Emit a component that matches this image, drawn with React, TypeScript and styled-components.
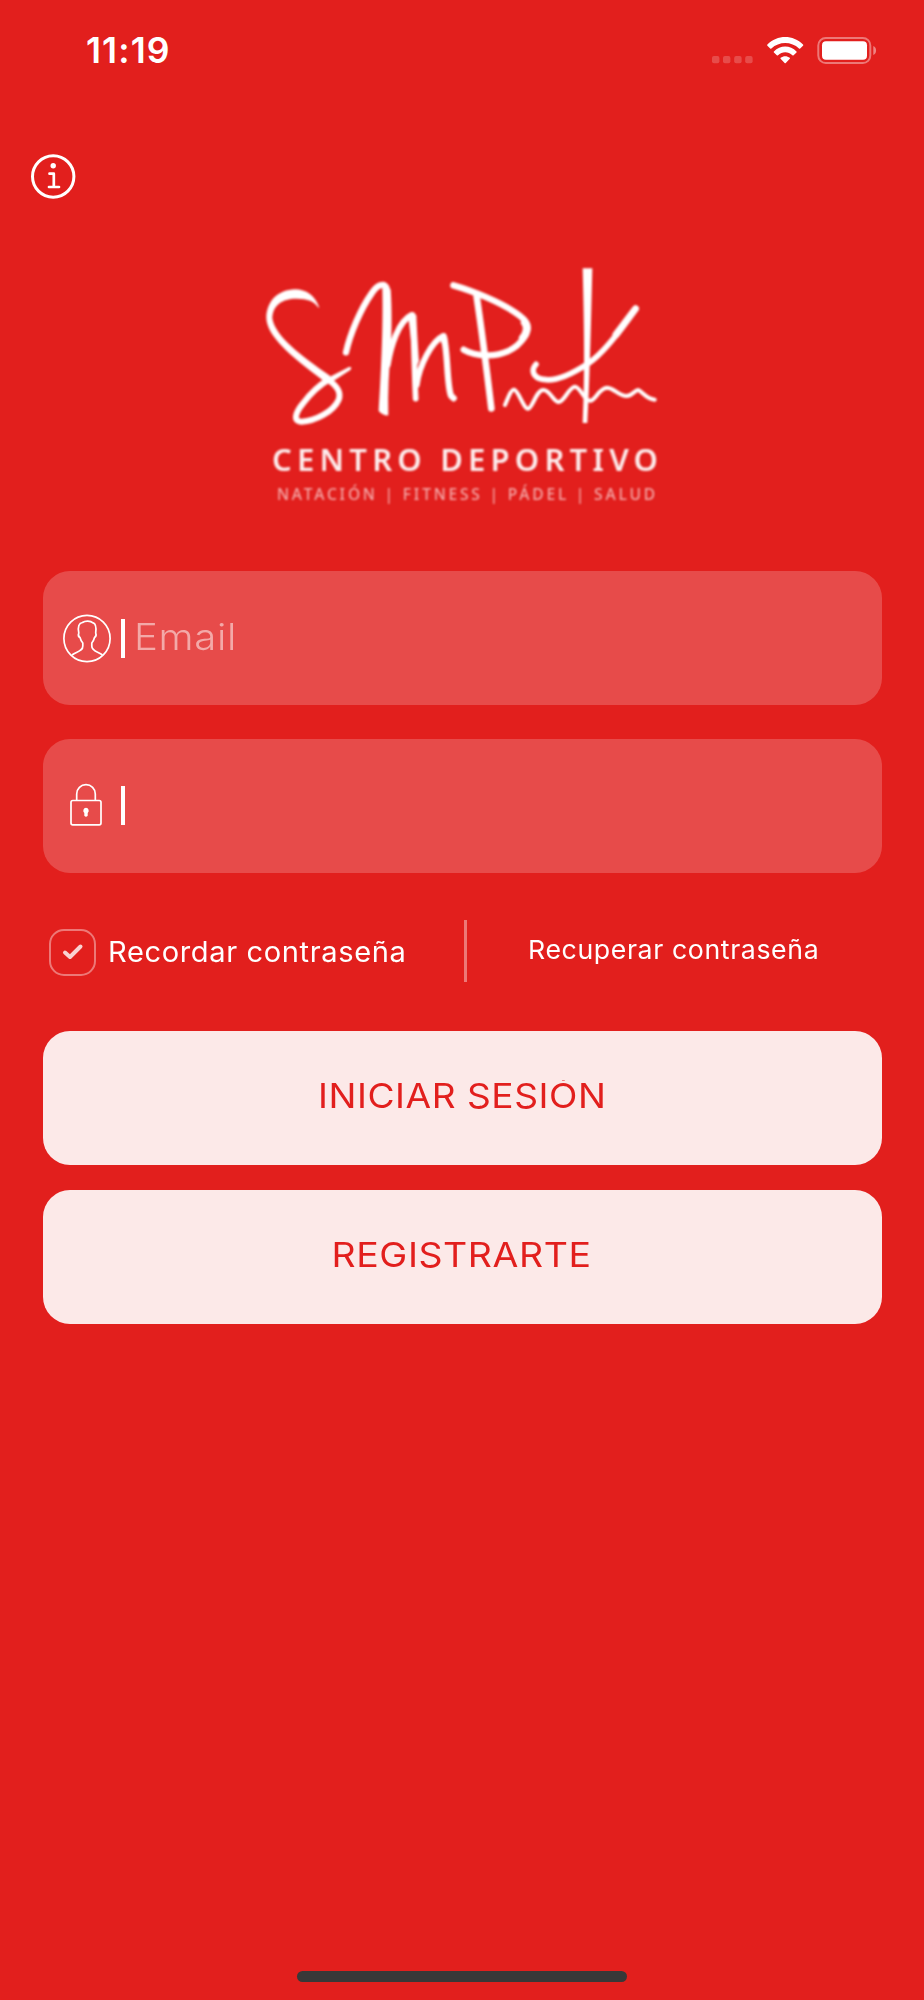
import React from "react";
import styled, { createGlobalStyle } from "styled-components";

const RED = "#e21f1d";

const GlobalStyle = createGlobalStyle`
  * { box-sizing: border-box; }
  body { margin: 0; background: ${RED}; }
`;

const Screen = styled.main`
  width: 924px;
  height: 2000px;
  background: ${RED};
  color: #fff;
  font-family: Inter, "Liberation Sans", sans-serif;
  display: flex;
  flex-direction: column;
  overflow: hidden;
`;

const StatusBar = styled.header`
  height: 100px;
  padding: 0 46px 0 86px;
  display: flex;
  justify-content: space-between;
  align-items: center;
`;

const Clock = styled.time`
  padding-top: 2px;
  font-size: 35.5px;
  line-height: 42px;
  font-weight: 600;
  letter-spacing: 1.1px;
`;

const Indicators = styled.svg`
  width: 166px;
  height: 30px;
`;

const TopBar = styled.nav`
  height: 160px;
  padding: 53px 0 0 30px;
`;

const InfoButton = styled.button`
  display: block;
  width: 46px;
  height: 46px;
  padding: 0;
  border: 0;
  background: none;
  svg { display: block; }
`;

const Logo = styled.svg`
  display: block;
  width: 410px;
  height: 250px;
  margin-left: 260px;
  filter: blur(0.8px);
`;

const Form = styled.form`
  display: flex;
  flex-direction: column;
  padding: 61px 42.5px 0;
`;

const Field = styled.label`
  height: 134px;
  border-radius: 27px;
  background: rgba(255, 255, 255, 0.2);
  display: flex;
  align-items: center;
  padding-left: 20.5px;
  & + & {
    margin-top: 34px;
    padding-bottom: 1px;
  }
`;

const FieldIcon = styled.svg`
  width: 48px;
  height: 50px;
  flex: none;
`;

const Bar = styled.span`
  width: 4px;
  height: 39px;
  margin-left: 10px;
  background: #fff;
`;

const Placeholder = styled.span`
  margin: -3px 0 0 8.5px;
  font-size: 37px;
  font-weight: 300;
  letter-spacing: 0.6px;
  color: rgba(255, 255, 255, 0.52);
  transform: scaleX(1.085);
  transform-origin: left;
`;

const Options = styled.div`
  height: 62px;
  margin: 47px 0 49px;
  display: flex;
  align-items: center;
`;

const Check = styled.span`
  width: 47px;
  height: 47px;
  margin: 2px 11.5px 0 6.5px;
  border: 2px solid rgba(255, 255, 255, 0.4);
  border-radius: 15px;
  display: flex;
  align-items: center;
  justify-content: center;
`;

const OptionText = styled.span<{ $size: number; $stretch: number; $shift: number }>`
  font-size: ${(p) => p.$size}px;
  letter-spacing: 0.6px;
  line-height: 36px;
  margin-top: ${(p) => p.$shift}px;
  font-weight: 400;
  white-space: nowrap;
  transform: scaleX(${(p) => p.$stretch});
  transform-origin: left;
`;

const Remember = styled.div`
  width: 421.5px;
  display: flex;
  align-items: center;
`;

const Divider = styled.span`
  width: 2.5px;
  height: 62px;
  margin-right: 61.5px;
  background: rgba(255, 255, 255, 0.4);
`;

const Button = styled.button`
  height: 134px;
  border: 0;
  border-radius: 27px;
  padding: 0 0 5px;
  background: rgba(255, 255, 255, 0.9);
  color: ${RED};
  font: 400 34.5px/34px Inter, "Liberation Sans", sans-serif;
  display: flex;
  align-items: center;
  justify-content: center;
  & + & { margin-top: 25px; }
`;

const Caption = styled.span<{ $stretch: number }>`
  letter-spacing: 0.5px;
  clip-path: inset(2px 0 0 0);
  transform: scaleX(${(p) => p.$stretch});
`;

const HomeBar = styled.div`
  width: 330px;
  height: 11px;
  margin: auto auto 18px 297px;
  border-radius: 6px;
  background: #383838;
`;

const StatusIcons = () => (
  <Indicators viewBox="0 0 166 30" fill="#fff">
    <g opacity="0.2">
      <rect x="0" y="21" width="7.4" height="7.2" rx="2" />
      <rect x="11" y="21" width="7.4" height="7.2" rx="2" />
      <rect x="22.2" y="21" width="7.4" height="7.2" rx="2" />
      <rect x="33.2" y="21" width="7.4" height="7.2" rx="2" />
    </g>
    <path d="M55.4 9.6C65 -.4 81.400 -.4 91 9.600Q91.500 10.200 91 10.800L88.200 13.600Q87.600 14 87 13.500C79.500 6.100 67 6.100 59.400 13.500Q58.800 14 58.200 13.600L55.400 10.800Q54.900 10.200 55.400 9.600Z" />
    <path d="M61.900 16.400C68.100 9.700 78.300 9.700 84.500 16.400Q85 17 84.500 17.500L81.600 20.200Q81 20.700 80.400 20.200C76.300 16.300 70.100 16.300 66 20.200Q65.400 20.700 64.800 20.200L61.900 17.500Q61.400 17 61.900 16.400Z" />
    <path d="M68.600 22.700C71.400 20.600 75 20.600 77.800 22.700Q78.300 23.200 77.800 23.700L73.800 28Q73.200 28.600 72.600 28L68.600 23.700Q68.100 23.200 68.600 22.700Z" />
    <rect x="106.300" y="2.900" width="52" height="25.200" rx="7.500" fill="none" stroke="#fff" strokeWidth="2" opacity="0.4" />
    <rect x="110" y="6.200" width="45" height="18.600" rx="4" />
    <path d="M161.300 11C165 12.500 165 18.500 161.300 20Z" opacity="0.45" />
  </Indicators>
);

const SmpLogo = () => (
  <Logo viewBox="260 260 410 250" fill="#fff">
    <g transform="translate(250 255) scale(0.33333)" strokeLinecap="round" strokeLinejoin="round">
      <path d="M208 158C195 121 168 103 135 103C85 104 49 138 49 190C51 242 116 300 220 377L242 364C150 300 76 245 67 190C68 148 101 130 140 131C172 131 193 139 204 157Z" />
      <path d="M226 369C262 391 275 411 266 434C250 470 196 498 155 500C126 500 138 470 160 444C183 414 212 388 236 374" fill="none" stroke="#fff" strokeWidth="18" />
      <path d="M225 373L297 336Q308 334 301 345L241 384Z" />
      <g fill="none" stroke="#fff">
        <path d="M288 292C300 238 331 163 365 115C382 88 403 82 410 100" strokeWidth="19" />
        <path d="M413 330C422 275 445 198 485 180" strokeWidth="18" />
        <path d="M500 390C508 330 546 258 580 243" strokeWidth="18" />
        <path d="M488 180C492 250 493 350 497 431" strokeWidth="17" />
        <path d="M581 244C594 290 590 390 603 422L611 430" strokeWidth="19" />
        <path d="M610 91C670 108 750 142 795 172C835 198 842 216 824 245C798 287 752 302 710 301C682 300 660 295 641 284" strokeWidth="19" />
        <path d="M824 203C834 215 831 234 818 249" strokeWidth="23" />
        <path d="M680 125C693 210 712 360 724 460" strokeWidth="20" />
        <path d="M1158 160C1120 215 1060 295 1015 325C960 361 910 380 880 373C848 368 842 345 858 328" strokeWidth="17" />
        <path d="M1156 162L1098 239" strokeWidth="21" />
        <path d="M765 450C774 430 783 402 793 404C805 407 821 461 834 461C847 461 859 405 880 405C900 405 911 441 926 441C943 441 957 395 975 395C991 395 1002 437 1020 437C1038 437 1045 399 1072 398C1094 400 1105 423 1130 423C1148 423 1155 404 1165 405C1177 410 1188 431 1214 434" strokeWidth="12" />
      </g>
      <path d="M397 98L422 103C426 160 425 225 423 275C417 345 413 410 415 481Q400 483 386 468C392 370 400 225 397 98Z" />
      <path d="M474 178L499 180C501 230 505 290 507 318L494 350Z" />
      <path d="M567 243L591 243L598 330Z" />
      <path d="M998 40H1027C1024 170 1019 390 1012 504H998C1006 350 1001 160 998 40Z" />
    </g>
    <text x="272" y="471" fontFamily="Noto Sans, sans-serif" fontSize="31" fontWeight="600" textLength="386" opacity="0.92">CENTRO DEPORTIVO</text>
    <text x="277" y="499.500" fontFamily="Noto Sans, sans-serif" fontSize="15.500" fontWeight="500" textLength="378" opacity="0.62">NATACIÓN | FITNESS | PÁDEL | SALUD</text>
  </Logo>
);

export default function App() {
  return (
    <>
      <GlobalStyle />
      <Screen>
        <StatusBar>
          <Clock>11:19</Clock>
          <StatusIcons />
        </StatusBar>
        <TopBar>
          <InfoButton aria-label="Información">
            <svg width="46" height="46" viewBox="0 0 46 46" fill="none" stroke="#fff" strokeLinecap="round" strokeLinejoin="round">
              <circle cx="23.200" cy="23.500" r="20.700" strokeWidth="3" />
              <circle cx="23.200" cy="12.700" r="2.700" fill="#fff" stroke="none" />
              <path d="M19.500 20.700H23.800V34M19 34H29" strokeWidth="2.700" />
            </svg>
          </InfoButton>
        </TopBar>
        <SmpLogo />
        <Form>
          <Field>
            <FieldIcon viewBox="0 0 48 50" fill="none" stroke="#fff" strokeWidth="1.700" strokeLinejoin="round">
              <circle cx="24" cy="25.500" r="23.100" />
              <path d="M9 42C13 38.500 20 38.500 19.800 33V30C18 28 17.500 26.500 17 24.500C15 23.500 15.200 21.500 15.800 20C14.500 13.500 16 10 19.500 9.500C22 7.500 27.500 7.500 30 9.800C33 10.500 33.500 13.500 32.700 20C33.300 21.500 33.300 23.500 31.500 24.500C31 26.500 30.500 28 28.800 30V33C28.600 38.500 35.500 38.500 39.500 42" />
            </FieldIcon>
            <Bar />
            <Placeholder>Email</Placeholder>
          </Field>
          <Field>
            <FieldIcon viewBox="0 0 48 50" fill="none" stroke="#fff" strokeWidth="1.700">
              <rect x="8" y="19.500" width="30" height="24.300" rx="1.800" />
              <path d="M13.700 19.500V13A9.300 9.300 0 0 1 32.300 13V19.500" />
              <path d="M23 26.800A2.900 2.900 0 0 1 24.700 31.900V34.800Q23 36.800 21.300 34.800V31.900A2.900 2.900 0 0 1 23 26.800Z" fill="#fff" stroke="none" />
            </FieldIcon>
            <Bar />
          </Field>
          <Options>
            <Remember>
              <Check>
                <svg width="22" height="18" viewBox="0 0 22 18" fill="none" stroke="#f9d2d1" strokeWidth="4" strokeLinecap="round" strokeLinejoin="round">
                  <path d="M3 9.500L8 14L18.500 3.500" />
                </svg>
              </Check>
              <OptionText $size={28} $stretch={1.038} $shift={2}>Recordar contraseña</OptionText>
            </Remember>
            <Divider />
            <OptionText $size={26} $stretch={1.026} $shift={-3}>Recuperar contraseña</OptionText>
          </Options>
          <Button type="button"><Caption $stretch={1.075}>INICIAR SESIÓN</Caption></Button>
          <Button type="button"><Caption $stretch={1.087}>REGISTRARTE</Caption></Button>
        </Form>
        <HomeBar />
      </Screen>
    </>
  );
}
